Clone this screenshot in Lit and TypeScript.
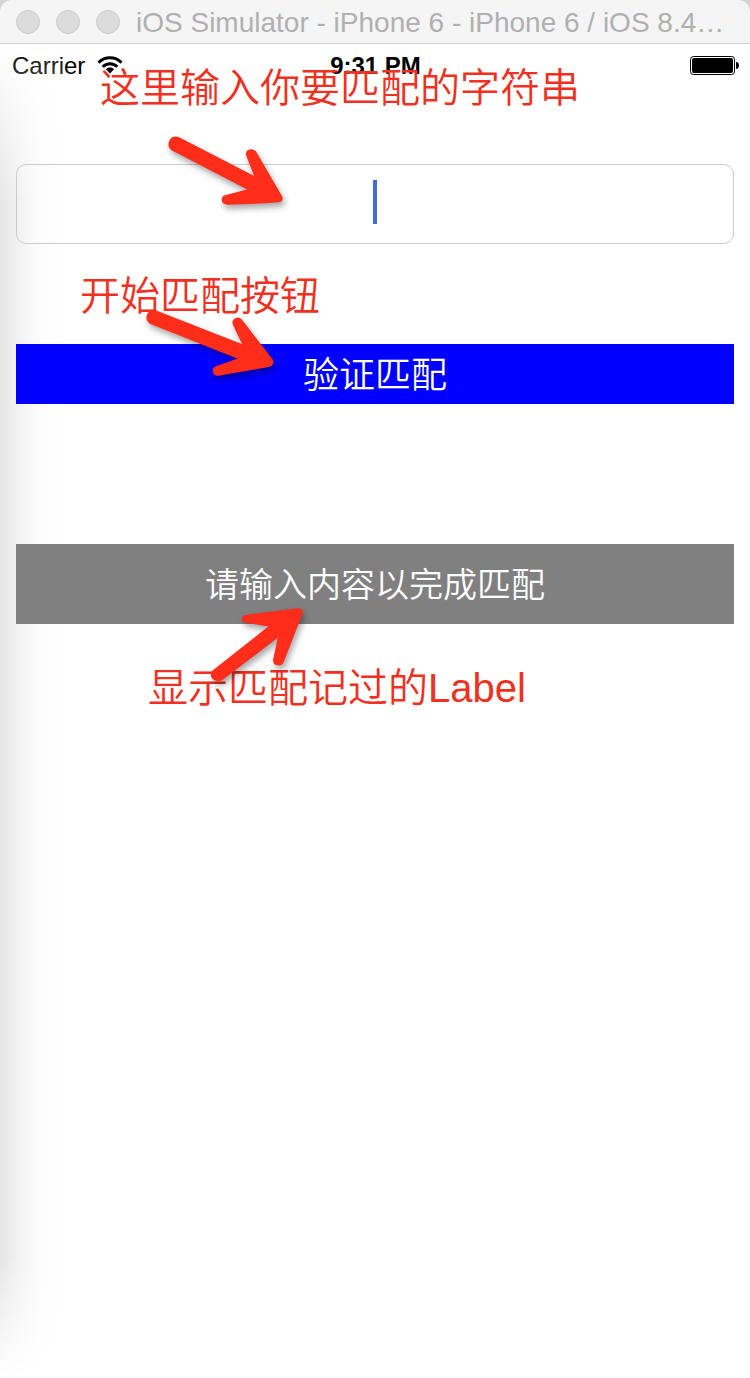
import { LitElement, html, css, svg } from "lit";
import { customElement, property, state } from "lit/decorators.js";

@customElement("window-bar")
class WindowBar extends LitElement {
  static styles = css`
    :host {
      display: block;
      background: #d4d4d4;
    }
    .bar {
      display: flex;
      align-items: center;
      height: 44px;
      box-sizing: border-box;
      padding: 0 24px 0 16px;
      border-bottom: 1px solid #cfcfcf;
      border-radius: 12px 12px 0 0;
      background: #f5f5f5;
    }
    .lights {
      display: flex;
      gap: 16px;
      flex: none;
      margin-right: 16px;
    }
    .light {
      width: 24px;
      height: 24px;
      box-sizing: border-box;
      padding: 0;
      border: 1px solid #cbcbcb;
      border-radius: 50%;
      background: #dcdcdc;
    }
    .title {
      flex: 1;
      margin: 0;
      padding-top: 2px;
      font-size: 28px;
      line-height: 40px;
      font-weight: 400;
      color: #b0b0b0;
      white-space: nowrap;
    }
  `;

  render() {
    return html`
      <header class="bar">
        <div class="lights">
          <button class="light" aria-label="Close"></button>
          <button class="light" aria-label="Minimize"></button>
          <button class="light" aria-label="Zoom"></button>
        </div>
        <h1 class="title">iOS Simulator - iPhone 6 - iPhone 6 / iOS 8.4…</h1>
      </header>
    `;
  }
}

@customElement("status-bar")
class StatusBar extends LitElement {
  static styles = css`
    :host {
      display: grid;
      grid-template-columns: 1fr auto 1fr;
      align-items: center;
      height: 40px;
      padding: 0 11px 0 12px;
      font-size: 24px;
      line-height: 40px;
      color: #000;
    }
    .carrier {
      display: flex;
      align-items: center;
      gap: 12px;
    }
    .text {
      padding-top: 2px;
    }
    .time {
      font-weight: 700;
    }
    .battery {
      justify-self: end;
    }
    svg {
      display: block;
    }
  `;

  render() {
    return html`
      <div class="carrier">
        <span class="text">Carrier</span>
        <svg width="26" height="18" viewBox="0 0 26 18" aria-label="Wi-Fi">
          <g fill="none" stroke="#000" stroke-width="3">
            <path d="M1.5 6.6C8 .1 18 .1 24.5 6.6" />
            <path d="M5.7 10.8C9.8 6.6 16.2 6.6 20.3 10.8" />
          </g>
          <path d="M8.9 13.2C11.2 10.9 14.8 10.9 17.1 13.2L13 17.4Z" />
        </svg>
      </div>
      <span class="text time">9:31 PM</span>
      <svg class="battery" width="49" height="19" viewBox="0 0 49 19" aria-label="Battery full">
        <rect x=".5" y=".5" width="44" height="18" rx="3" fill="none" stroke="#000" />
        <rect x="2" y="2" width="41" height="15" rx="2" />
        <path d="M46 6c4 0 4 7 0 7z" />
      </svg>
    `;
  }
}

const ARROWS: Record<string, string> = {
  field:
    "M85 53L316 172L290 104C288 88 308 86 316 95L394 229C399 238 394 245 384 245L348 248L232 252C214 252 212 230 228 227L297 209L67 90C48 76 60 46 85 53Z",
  button:
    "M258 153L520 256L490 192C486 176 505 170 514 180L606 299C612 309 606 317 596 319L446 345C428 347 425 324 440 320L508 296L242 190C222 178 232 147 258 153Z",
  label:
    "M218 394L390 258L318 246C303 243 305 227 320 226L472 207C482 205 488 212 485 222L430 364C424 380 402 376 401 361L416 289L251 415C230 430 206 414 218 394Z",
};

@customElement("pointer-arrow")
class PointerArrow extends LitElement {
  @property() kind = "field";

  static styles = css`
    :host {
      display: block;
    }
    .arrow {
      display: block;
      overflow: visible;
      filter: drop-shadow(2px 4px 3px rgba(0, 0, 0, 0.35));
    }
  `;

  render() {
    return html`
      <svg class="arrow" width="250" height="150" viewBox="0 0 750 450" aria-hidden="true">
        ${svg`<path fill="#ff2d1a" stroke="#ff2d1a" stroke-width="4" stroke-linejoin="round" d=${ARROWS[this.kind]} />`}
      </svg>
    `;
  }
}

@customElement("app-root")
class AppRoot extends LitElement {
  @state() private text = "";

  static styles = css`
    :host {
      display: flex;
      flex-direction: column;
      min-height: 100vh;
      background: #fff;
      font-family: "Liberation Sans", "Noto Sans CJK SC", sans-serif;
    }
    .screen {
      position: relative;
      flex: 1;
    }
    .shade {
      position: absolute;
      inset: 0 auto 0 0;
      width: 64px;
      background: linear-gradient(
        to right,
        #e5e5e5 0,
        #ededed 10px,
        #f6f6f6 26px,
        #fcfcfc 40px,
        #fff 64px
      );
      mask-image: linear-gradient(
        to bottom,
        transparent 0,
        #000 160px,
        #000 calc(100% - 120px),
        transparent 100%
      );
    }
    .content {
      position: relative;
      display: flex;
      flex-direction: column;
      padding: 80px 16px 0;
    }
    .field {
      position: relative;
      display: block;
      margin-bottom: 100px;
    }
    .input {
      display: block;
      width: 100%;
      height: 80px;
      box-sizing: border-box;
      padding: 0 16px;
      border: 1px solid #cccccc;
      border-radius: 10px;
      outline: none;
      background: transparent;
      font: inherit;
      font-size: 34px;
      text-align: center;
      caret-color: transparent;
    }
    .caret {
      position: absolute;
      top: 16px;
      left: calc(50% - 2px);
      width: 4px;
      height: 44px;
      background: #446bdb;
    }
    .verify {
      height: 60px;
      margin-bottom: 140px;
      padding: 4px 0 0;
      border: 0;
      background: #0000ff;
      color: #fff;
      font: inherit;
      font-weight: 350;
      font-size: 36px;
      line-height: 56px;
    }
    .result {
      display: block;
      padding-top: 2px;
      background: #808080;
      color: #fff;
      font-weight: 350;
      font-size: 34px;
      line-height: 78px;
      text-align: center;
    }
    .note {
      position: absolute;
      margin: 0;
      color: #f03020;
      font-weight: 350;
      font-size: 40px;
      line-height: 48px;
      white-space: nowrap;
    }
    .note-field {
      left: 100px;
      top: 20px;
    }
    .note-button {
      left: 80px;
      top: 228px;
    }
    .note-label {
      left: 148px;
      top: 620px;
    }
    .arrow {
      position: absolute;
      pointer-events: none;
    }
    .arrow-field {
      left: 150px;
      top: 76px;
    }
    .arrow-button {
      left: 70px;
      top: 216px;
    }
    .arrow-label {
      left: 140px;
      top: 496px;
    }
  `;

  private onInput(e: Event) {
    this.text = (e.target as HTMLInputElement).value;
  }

  render() {
    return html`
      <window-bar></window-bar>
      <main class="screen">
        <div class="shade"></div>
        <status-bar></status-bar>
        <div class="content">
          <label class="field">
            <input
              class="input"
              type="text"
              aria-label="这里输入你要匹配的字符串"
              .value=${this.text}
              @input=${this.onInput}
            />
            ${this.text ? "" : html`<span class="caret"></span>`}
          </label>
          <button class="verify" type="button">验证匹配</button>
          <output class="result">请输入内容以完成匹配</output>
        </div>
        <p class="note note-field">这里输入你要匹配的字符串</p>
        <p class="note note-button">开始匹配按钮</p>
        <p class="note note-label">显示匹配记过的Label</p>
        <pointer-arrow class="arrow arrow-field" kind="field"></pointer-arrow>
        <pointer-arrow class="arrow arrow-button" kind="button"></pointer-arrow>
        <pointer-arrow class="arrow arrow-label" kind="label"></pointer-arrow>
      </main>
    `;
  }
}
